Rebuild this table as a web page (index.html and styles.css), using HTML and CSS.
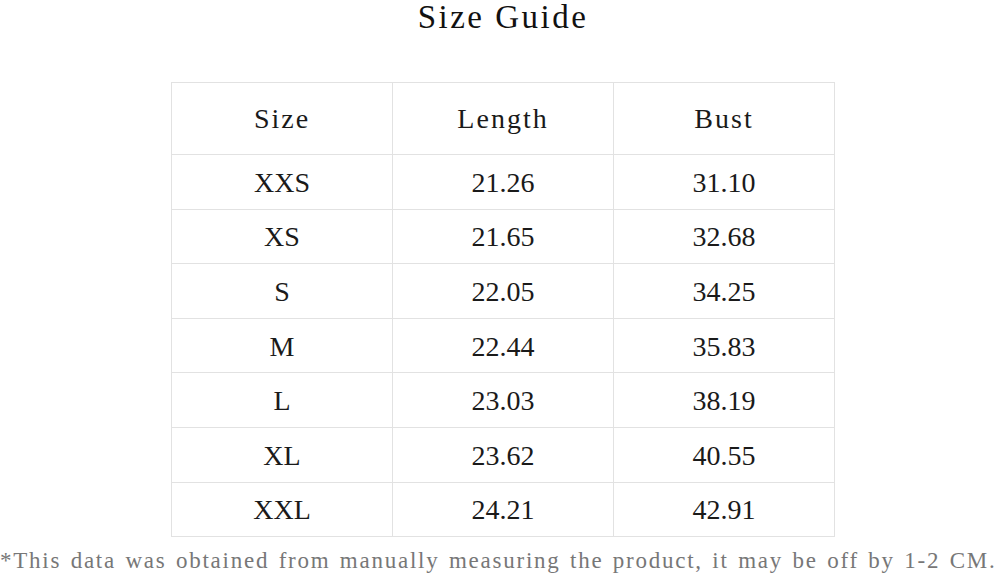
FILE: index.html
```html
<!DOCTYPE html>
<html>
<head>
<meta charset="utf-8">
<link rel="stylesheet" href="styles.css">
</head>
<body>
<h1 class="title">Size Guide</h1>
<table class="guide">
  <thead>
    <tr><th>Size</th><th>Length</th><th>Bust</th></tr>
  </thead>
  <tbody>
    <tr><td>XXS</td><td>21.26</td><td>31.10</td></tr>
    <tr><td>XS</td><td>21.65</td><td>32.68</td></tr>
    <tr><td>S</td><td>22.05</td><td>34.25</td></tr>
    <tr><td>M</td><td>22.44</td><td>35.83</td></tr>
    <tr><td>L</td><td>23.03</td><td>38.19</td></tr>
    <tr><td>XL</td><td>23.62</td><td>40.55</td></tr>
    <tr><td>XXL</td><td>24.21</td><td>42.91</td></tr>
  </tbody>
</table>
<p class="note">*This data was obtained from manually measuring the product, it may be off by 1-2 CM.</p>
</body>
</html>
```
FILE: styles.css
```css
html, body {
  margin: 0;
  padding: 0;
  background: #ffffff;
}
body {
  font-family: "Liberation Serif", "Times New Roman", serif;
  color: #1a1a1a;
  width: 1000px;
  overflow: hidden;
}
.title {
  margin: 0;
  padding-left: 6px;
  text-align: center;
  font-size: 33px;
  font-weight: normal;
  letter-spacing: 2.5px;
  line-height: 34px;
  height: 34px;
  color: #111;
}
.guide {
  margin: 48px 0 0 171px;
  width: 664px;
  border-collapse: collapse;
  table-layout: fixed;
  font-size: 28px;
}
.guide th, .guide td {
  border: 1px solid #e2e2e2;
  text-align: center;
  font-weight: normal;
  padding: 0;
  line-height: 30px;
}
.guide th {
  height: 71px;
  letter-spacing: 2px;
}
.guide td {
  height: 51.6px;
  padding-top: 2px;
}
.note {
  margin: 11px 0 0 0;
  font-size: 23px;
  line-height: 26px;
  letter-spacing: 1.75px;
  word-spacing: 2px;
  white-space: nowrap;
  color: #777;
}
```
